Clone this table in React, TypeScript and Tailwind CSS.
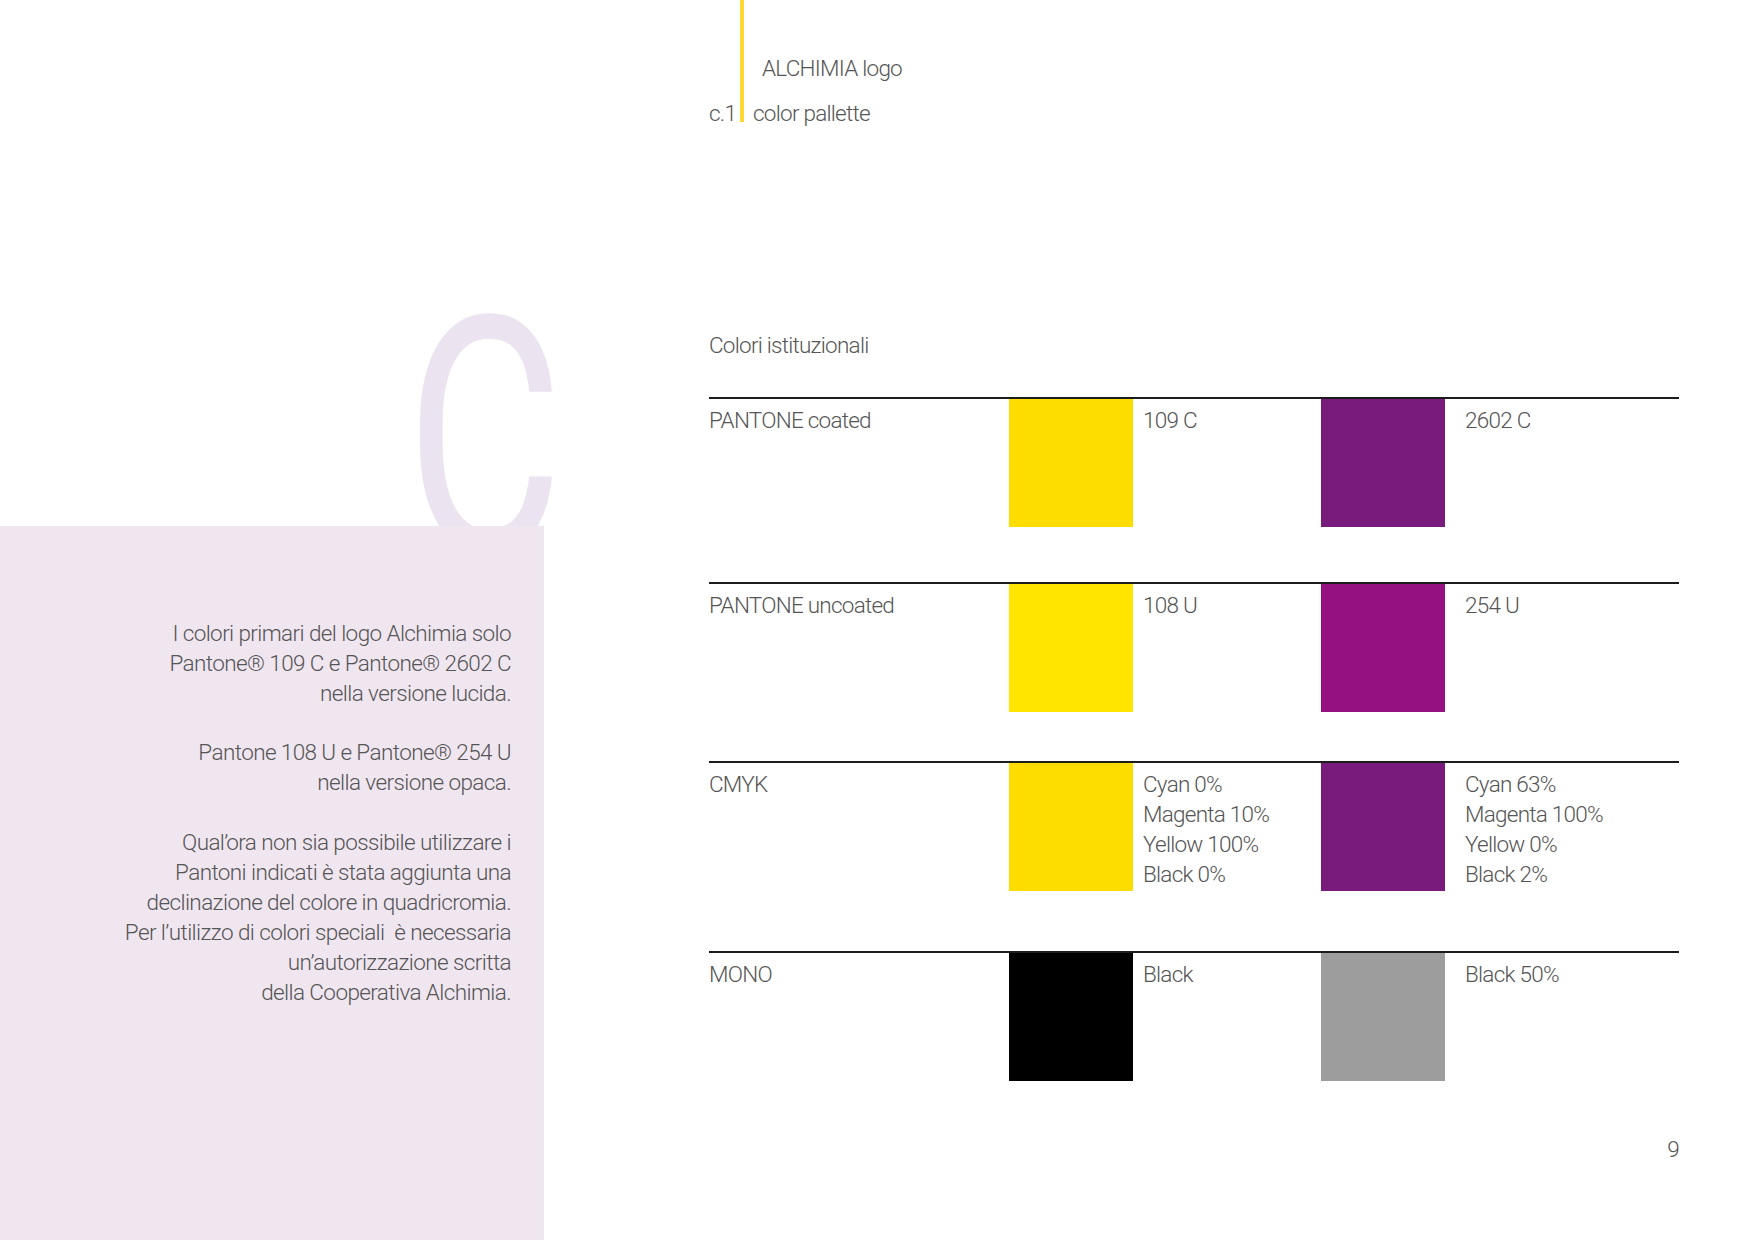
const rows = [
    {
        label: "PANTONE coated",
        h: "h-[185px]",
        a: { color: "bg-[#fddd00]", text: ["109 C"] },
        b: { color: "bg-[#781b7c]", text: ["2602 C"] },
    },
    {
        label: "PANTONE uncoated",
        h: "h-[179px]",
        a: { color: "bg-[#ffe500]", text: ["108 U"] },
        b: { color: "bg-[#951182]", text: ["254 U"] },
    },
    {
        label: "CMYK",
        h: "h-[190px]",
        a: {
            color: "bg-[#fddd00]",
            text: ["Cyan 0%", "Magenta 10%", "Yellow 100%", "Black 0%"],
        },
        b: {
            color: "bg-[#781b7c]",
            text: ["Cyan 63%", "Magenta 100%", "Yellow 0%", "Black 2%"],
        },
    },
    {
        label: "MONO",
        h: "h-[181px]",
        a: { color: "bg-[#000000]", text: ["Black"] },
        b: { color: "bg-[#9d9d9e]", text: ["Black 50%"] },
    },
];

const font = "font-['Roboto','Liberation_Sans',sans-serif]";

export default function App() {
    return (
        <div className={`w-[1754px] h-[1240px] bg-white flex overflow-hidden text-[#555555] font-light tracking-[-0.75px] ${font}`}>
            {/* left column: big letter, covered by the note box */}
            <div className="w-[544px] flex flex-col shrink-0">
                <div className="h-[526px] shrink-0 pt-[319px] pl-[406px]">
                    <span className="block w-[200px] origin-left scale-x-[0.73] text-[330px] leading-[240px] font-normal tracking-normal text-[#ebe3ef]">
                        C
                    </span>
                </div>
                <div className="relative flex-1 bg-[#f0e6f0] pt-[92px] pr-[33px] text-right text-[22.5px] leading-[30px] tracking-[-0.6px]">
                    <p className="mb-[29px]">
                        I colori primari del logo Alchimia solo
                        <br />
                        Pantone® 109 C e Pantone® 2602 C
                        <br />
                        nella versione lucida.
                    </p>
                    <p className="mb-[30px]">
                        Pantone 108 U e Pantone® 254 U
                        <br />
                        nella versione opaca.
                    </p>
                    <p className="whitespace-pre">
                        Qual’ora non sia possibile utilizzare i
                        <br />
                        Pantoni indicati è stata aggiunta una
                        <br />
                        declinazione del colore in quadricromia.
                        <br />
                        Per l’utilizzo di colori speciali  è necessaria
                        <br />
                        un’autorizzazione scritta
                        <br />
                        della Cooperativa Alchimia.
                    </p>
                </div>
            </div>

            {/* right column */}
            <div className="ml-[165px] w-[970px] flex flex-col">
                <div className="flex items-start h-[122px] text-[22.5px] leading-[30px]">
                    <span className="w-[31px] pt-[98px]">c.1</span>
                    <div className="w-[4px] h-[122px] bg-[#fdd835]" />
                    <div className="flex flex-col pt-[53px]">
                        <span className="pl-[18px]">ALCHIMIA logo</span>
                        <span className="pl-[9px] mt-[15px]">color pallette</span>
                    </div>
                </div>

                <p className="mt-[208px] text-[22.5px] leading-[30px]">Colori istituzionali</p>

                <div className="mt-[37px] flex flex-col">
                    {rows.map((row) => (
                        <div
                            key={row.label}
                            className={`${row.h} border-t-2 border-[#1c1c1c] grid grid-cols-[300px_124px_188px_124px_1fr] text-[22.5px] leading-[30px]`}
                        >
                            <span className="pt-[6px]">{row.label}</span>
                            <div className={`${row.a.color} h-[128px]`} />
                            <div className="pl-[10px] pt-[6px] flex flex-col">
                                {row.a.text.map((t) => (
                                    <span key={t}>{t}</span>
                                ))}
                            </div>
                            <div className={`${row.b.color} h-[128px]`} />
                            <div className="pl-[20px] pt-[6px] flex flex-col">
                                {row.b.text.map((t) => (
                                    <span key={t}>{t}</span>
                                ))}
                            </div>
                        </div>
                    ))}
                </div>

                <p className="mt-[2px] text-right text-[22.5px] leading-[30px]">9</p>
            </div>
        </div>
    );
}
